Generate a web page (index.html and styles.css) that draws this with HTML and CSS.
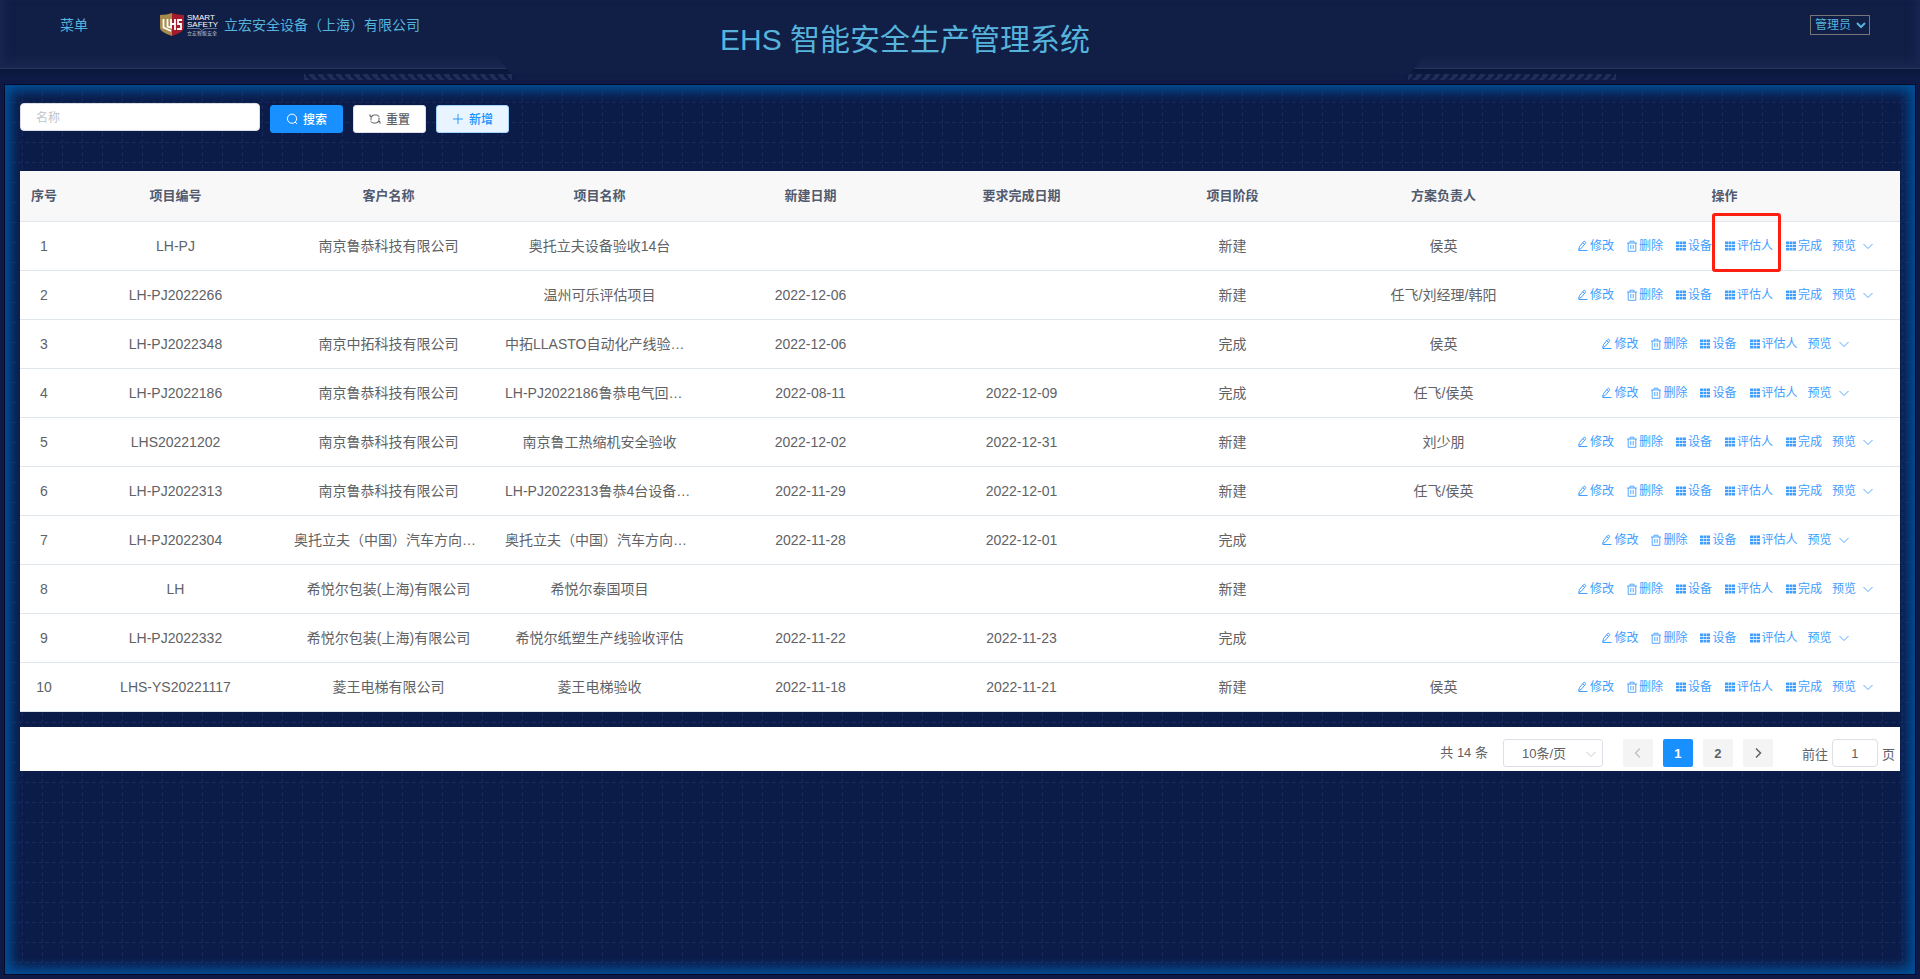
FILE: index.html
```
<!DOCTYPE html>
<html lang="zh-CN">
<head>
    <meta charset="UTF-8">
    <meta name="viewport" content="width=device-width, initial-scale=1.0">
    <title>EHS 智能安全生产管理系统</title>
    <link rel="stylesheet" href="styles.css">
</head>
<body>
    <!-- icons -->
    <svg class="sprite" aria-hidden="true">
        <symbol id="i-edit" viewBox="0 0 12 12"><path d="M2.5 6.6 6.5 1.7q.8-.8 1.7-.1t.2 1.7L4.4 8.2 1.6 9.7zM5.7 2.7l1.9 1.5M1.6 10.5h8.9" fill="none" stroke="currentColor"/></symbol>
        <symbol id="i-del" viewBox="0 0 12 12"><path d="M1 3h10M4 3V1.2h4V3M2.2 3v8.3h7.6V3M4.8 5v4.2M7.2 5v4.2" fill="none" stroke="currentColor" stroke-width=".9"/></symbol>
        <symbol id="i-grid" viewBox="0 0 12 12"><path d="M1 1.5h3V4H1zM4.5 1.5h3V4h-3zM8 1.5h3V4H8zM1 4.8h3v2.4H1zM4.5 4.8h3v2.4h-3zM8 4.8h3v2.4H8zM1 8h3v2.5H1zM4.5 8h3v2.5h-3zM8 8h3v2.5H8z" fill="currentColor"/></symbol>
        <symbol id="i-down" viewBox="0 0 12 12"><path d="M1.5 4 6 8.5 10.5 4" fill="none" stroke="currentColor" stroke-width=".9"/></symbol>
        <symbol id="i-search" viewBox="0 0 12 12"><circle cx="6" cy="5.7" r="4.6" fill="none" stroke="currentColor"/><path d="m9.2 9 1.8 2" fill="none" stroke="currentColor"/></symbol>
        <symbol id="i-refresh" viewBox="0 0 12 12"><path d="M2 7.5V5q0-3 3-3h2.5Q9.600 2 10.200 4M1 1.200V3.500h2.500M10 4.500V7q0 3-3 3H4.500Q2.400 10 1.800 8.300M11 10.800V8.500H8.500" fill="none" stroke="currentColor"/></symbol>
        <symbol id="i-plus" viewBox="0 0 12 12"><path d="M6 1v10M1 6h10" fill="none" stroke="currentColor" stroke-width=".9"/></symbol>
        <symbol id="i-left" viewBox="0 0 12 12"><path d="M8 1.5 3.5 6 8 10.5" fill="none" stroke="currentColor" stroke-width="1.5"/></symbol>
        <symbol id="i-right" viewBox="0 0 12 12"><path d="M4 1.5 8.5 6 4 10.5" fill="none" stroke="currentColor" stroke-width="1.5"/></symbol>
    </svg>

    <header class="header">
        <div class="rail rail-left"><span class="stripes"></span></div>
        <div class="rail rail-right"><span class="stripes"></span></div>
        <div class="header-side">
            <a class="menu-link" href="#">菜单</a>
            <svg class="logo" viewBox="0 0 60 26" role="img" aria-label="LHS Smart Safety">
                <path d="M1 3Q8 3 13 1v23Q1 20 1 16z" fill="#a88b4c"/>
                <path d="M25 3Q18 3 13 1v23q12-4 12-8z" fill="#a51c2b"/>
                <path d="M4.5 7v8.500L12 19M8.500 7v7.500l3.500 1V7M12 12h4M16 7v11M23 8h-4v4h3v5h-4" fill="none" stroke="#fff" stroke-width="1.8"/>
                <text class="logo-name" x="28" y="8">SMART</text>
                <text class="logo-name" x="28" y="15">SAFETY</text>
                <path d="M28 16.5h12l3 2 3-2h12" fill="none" stroke="#a9b0c4" stroke-width=".6"/>
                <text class="logo-sub" x="28" y="23">立宏智能安全</text>
            </svg>
            <span class="company">立宏安全设备（上海）有限公司</span>
        </div>
        <h1 class="title">EHS 智能安全生产管理系统</h1>
        <div class="header-user">
            <select class="user-select" aria-label="用户"><option>管理员</option></select>
        </div>
    </header>

    <main class="main">
        <form class="search" onsubmit="return false">
            <input class="search-input" type="text" placeholder="名称" aria-label="名称">
            <button class="btn btn-primary" type="submit"><svg class="icon"><use href="#i-search"/></svg>搜索</button>
            <button class="btn" type="reset"><svg class="icon"><use href="#i-refresh"/></svg>重置</button>
            <button class="btn btn-plain" type="button"><svg class="icon"><use href="#i-plus"/></svg>新增</button>
        </form>

        <table class="table">
            <colgroup>
                <col class="col-index"><col class="col-code"><col><col><col><col><col><col><col class="col-actions">
            </colgroup>
            <thead>
                <tr><th>序号</th><th>项目编号</th><th>客户名称</th><th>项目名称</th><th>新建日期</th><th>要求完成日期</th><th>项目阶段</th><th>方案负责人</th><th>操作</th></tr>
            </thead>
            <tbody id="rows"></tbody>
        </table>

        <div class="pagination">
            <span class="total">共 14 条</span>
            <span class="size-box">
                <select class="size-select" aria-label="每页条数"><option>10条/页</option></select>
                <svg class="icon size-arrow"><use href="#i-down"/></svg>
            </span>
            <div class="pager">
                <button class="page" type="button" disabled aria-label="上一页"><svg class="icon"><use href="#i-left"/></svg></button>
                <button class="page active" type="button">1</button>
                <button class="page" type="button">2</button>
                <button class="page" type="button" aria-label="下一页"><svg class="icon"><use href="#i-right"/></svg></button>
            </div>
            <label class="jump">前往<input class="jump-input" type="text" value="1">页</label>
        </div>
    </main>
    <script src="script.js"></script>
</body>
</html>
```
FILE: styles.css
```
* {
    box-sizing: border-box;
}
body {
    margin: 0;
    min-height: 100vh;
    display: flex;
    flex-direction: column;
    padding: 0 4px 4px;
    background: #0e1a45;
    color: #606266;
    font-family: "Liberation Sans", "Noto Sans CJK SC", sans-serif;
    font-size: 14px;
}
button, input, select {
    font-family: inherit;
}
.sprite {
    position: absolute;
    width: 0;
    height: 0;
}
.icon {
    width: 12px;
    height: 12px;
    flex: none;
}

/* header */
.header {
    position: relative;
    display: grid;
    grid-template-columns: 1fr auto 1fr;
    align-items: start;
    height: 80px;
    margin: 0 -4px 4px;
    background: #111e46;
    box-shadow: inset 10px 0 12px -8px #1b2b57, inset -10px 0 12px -8px #1b2b57;
    color: #56b4dc;
}
.rail {
    position: absolute;
    bottom: 0;
    height: 26px;
    background: linear-gradient(transparent, #18264e 14px, #27355f 14px, #27355f 15px, #0a1638 15px, #0e1c48);
}
.rail-left {
    left: 0;
    width: 518px;
    clip-path: polygon(0 0, 494px 0, 506px 14px, 100% 100%, 0 100%);
}
.rail-right {
    right: 0;
    width: 516px;
    clip-path: polygon(22px 0, 100% 0, 100% 100%, 0 100%, 11px 14px);
}
.stripes {
    position: absolute;
    bottom: 0;
    width: 208px;
    height: 6px;
    background: repeating-linear-gradient(51deg, #1f2d57 0 4px, transparent 4px 7px);
}
.rail-left .stripes {
    right: 6px;
}
.rail-right .stripes {
    left: 4px;
    background: repeating-linear-gradient(-51deg, #1f2d57 0 4px, transparent 4px 7px);
}
.header-side {
    display: flex;
    align-items: center;
    height: 50px;
    padding-left: 60px;
}
.menu-link {
    color: inherit;
    text-decoration: none;
}
.menu-link, .company {
    padding-bottom: 2px;
}
.logo {
    width: 60px;
    height: 26px;
    margin: 0 5px 0 71px;
}
.logo-name {
    font: 8px "Liberation Sans", sans-serif;
    fill: #fff;
}
.logo-sub {
    font: 5px "Noto Sans CJK SC", sans-serif;
    fill: #c7cbd8;
}
.title {
    margin: 0;
    padding: 17px 110px 0 0;
    font-size: 30px;
    font-weight: normal;
    line-height: 45px;
    white-space: nowrap;
}
.header-user {
    display: flex;
    justify-content: flex-end;
    padding: 15px 50px 0 0;
}
.user-select {
    width: 60px;
    height: 20px;
    padding: 0;
    border: 1px solid #767676;
    background: transparent;
    color: inherit;
    font-size: 12px;
}

/* content */
.main {
    flex: 1;
    padding: 18px 15px 15px;
    border: 1px solid #030b2c;
    background: #0c1c49 url("data:image/svg+xml,%3Csvg xmlns='http://www.w3.org/2000/svg' width='20' height='20'%3E%3Cpath d='M0 17.5h20M17.5 0v20' fill='none' stroke='%23182a5e' stroke-dasharray='4 3 4 3 3 3'/%3E%3C/svg%3E");
    box-shadow: inset 0 0 12px 6px #005099;
}
.search {
    display: flex;
    align-items: flex-start;
    gap: 10px;
    height: 68px;
}
.search-input {
    width: 240px;
    height: 28px;
    padding: 1px 15px 0;
    border: 1px solid #dcdfe6;
    border-radius: 4px;
    font-size: 12px;
}
.search-input::placeholder {
    color: #c0c4cc;
}
.btn {
    display: inline-flex;
    align-items: center;
    justify-content: center;
    gap: 5px;
    width: 73px;
    height: 28px;
    margin-top: 2px;
    padding: 0 0 1px;
    border: 1px solid #dcdfe6;
    border-radius: 3px;
    background: #fff;
    color: #606266;
    font-size: 12px;
    font-weight: 500;
    cursor: pointer;
}
.btn-primary {
    border-color: #1890ff;
    background: #1890ff;
    color: #fff;
}
.btn-plain {
    border-color: #a3d3ff;
    background: #e8f4ff;
    color: #1890ff;
}

.table {
    width: 100%;
    table-layout: fixed;
    border-collapse: separate;
    border-spacing: 0;
    background: #fff;
}
.col-index {
    width: 48px;
}
.col-code {
    width: 215px;
}
.col-actions {
    width: 351px;
}
.table th {
    height: 51px;
    padding: 0 0 3px;
    border-bottom: 1px solid #dfe6ec;
    background: #f8f8f9;
    color: #515a6e;
    font-size: 13px;
}
.table td {
    height: 49px;
    padding: 0 11px;
    border-bottom: 1px solid #dfe6ec;
    text-align: center;
    line-height: 20px;
    overflow: hidden;
    text-overflow: ellipsis;
    white-space: nowrap;
}
.table td.actions {
    overflow: visible;
}
.action-list {
    display: flex;
    justify-content: center;
    gap: 12px;
    padding-left: 2px;
}
.action {
    position: relative;
    display: inline-flex;
    align-items: center;
    gap: 1px;
    padding: 0;
    border: 0;
    background: none;
    color: #409eff;
    font-size: 12px;
    line-height: 20px;
    cursor: pointer;
}
.action.more {
    gap: 6px;
    margin-left: -2px;
}
.action.marked::after {
    content: "";
    position: absolute;
    inset: -23px -8px -16px -12px;
    border: 3px solid #ff1f10;
    border-radius: 3px;
    z-index: 1;
}

/* pagination */
.pagination {
    display: flex;
    align-items: center;
    justify-content: flex-end;
    height: 44px;
    margin-top: 15px;
    padding: 8px 5px 0 0;
    background: #fff;
    font-size: 13px;
}
.total {
    padding-bottom: 3px;
}
.size-box {
    position: relative;
    margin: 0 20px 0 15px;
}
.size-select {
    appearance: none;
    width: 100px;
    height: 28px;
    padding: 0 18px;
    border: 1px solid #dcdfe6;
    border-radius: 3px;
    background: #fff;
    color: #606266;
    font-size: 13px;
}
.size-arrow {
    position: absolute;
    right: 6px;
    top: 9px;
    color: #c0c4cc;
}
.pager {
    display: flex;
    gap: 10px;
}
.page {
    display: flex;
    align-items: center;
    justify-content: center;
    width: 30px;
    height: 28px;
    padding: 0;
    border: 0;
    border-radius: 2px;
    background: #f4f4f5;
    color: #606266;
    font-size: 13px;
    font-weight: bold;
}
.page:disabled {
    color: #c0c4cc;
}
.page.active {
    background: #1890ff;
    color: #fff;
}
.jump {
    display: flex;
    align-items: center;
    gap: 4px;
    margin-left: 29px;
}
.jump-input {
    width: 46px;
    height: 28px;
    padding: 0 3px;
    border: 1px solid #dcdfe6;
    border-radius: 4px;
    color: #606266;
    font-size: 13px;
    text-align: center;
}
```
FILE: script.js
```
const projects = [
    ["LH-PJ", "南京鲁恭科技有限公司", "奥托立夫设备验收14台", "", "", "新建", "侯英"],
    ["LH-PJ2022266", "", "温州可乐评估项目", "2022-12-06", "", "新建", "任飞/刘经理/韩阳"],
    ["LH-PJ2022348", "南京中拓科技有限公司", "中拓LLASTO自动化产线验收项目", "2022-12-06", "", "完成", "侯英"],
    ["LH-PJ2022186", "南京鲁恭科技有限公司", "LH-PJ2022186鲁恭电气回路验收", "2022-08-11", "2022-12-09", "完成", "任飞/侯英"],
    ["LHS20221202", "南京鲁恭科技有限公司", "南京鲁工热缩机安全验收", "2022-12-02", "2022-12-31", "新建", "刘少朋"],
    ["LH-PJ2022313", "南京鲁恭科技有限公司", "LH-PJ2022313鲁恭4台设备验收", "2022-11-29", "2022-12-01", "新建", "任飞/侯英"],
    ["LH-PJ2022304", "奥托立夫（中国）汽车方向盘有限公司", "奥托立夫（中国）汽车方向盘有限公司", "2022-11-28", "2022-12-01", "完成", ""],
    ["LH", "希悦尔包装(上海)有限公司", "希悦尔泰国项目", "", "", "新建", ""],
    ["LH-PJ2022332", "希悦尔包装(上海)有限公司", "希悦尔纸塑生产线验收评估", "2022-11-22", "2022-11-23", "完成", ""],
    ["LHS-YS20221117", "菱王电梯有限公司", "菱王电梯验收", "2022-11-18", "2022-11-21", "新建", "侯英"]
];

function icon(name) {
    return `<svg class="icon"><use href="#i-${name}"/></svg>`;
}

function action(name, text, cls = "") {
    return `<button class="action ${cls}" type="button">${icon(name)}${text}</button>`;
}

document.getElementById("rows").innerHTML = projects.map((project, i) => {
    const cells = [i + 1, ...project].map(text => `<td>${text}</td>`).join("");
    const finish = project[5] === "新建" ? action("grid", "完成") : "";
    return `<tr>${cells}<td class="actions"><div class="action-list">
        ${action("edit", "修改")}${action("del", "删除")}${action("grid", "设备")}
        ${action("grid", "评估人", i === 0 ? "marked" : "")}${finish}
        <button class="action more" type="button">预览${icon("down")}</button>
    </div></td></tr>`;
}).join("");
```
